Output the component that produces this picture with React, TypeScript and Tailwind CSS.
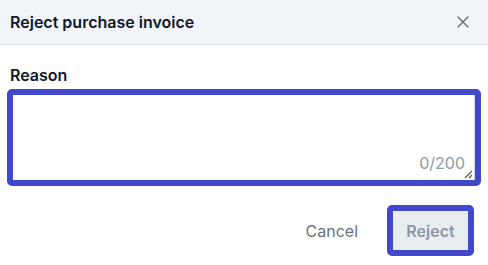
import { X } from 'lucide-react';

const App = () => {
  return (
    <div className="h-[265px] w-[488px] bg-white" style={{ fontFamily: 'Inter, "Noto Sans", sans-serif' }}>
      {/* Header */}
      <div className="flex h-[45px] items-center justify-between border-b border-[#d9dee6] bg-[#f1f4f9] pl-[10px] pr-[15px]">
        <h2 className="text-[16px] font-semibold text-[#111827]">Reject purchase invoice</h2>
        <X size={20} strokeWidth={1.5} className="text-[#5f6673]" />
      </div>

      {/* Body */}
      <div className="px-[10px] pt-[20px]">
        <label className="block text-[16px] font-semibold leading-[20px] text-[#111827]">Reason</label>
        <div className="relative -mx-[3px] mt-[4px] rounded-[5px] border-[6px] border-[#4148cd]">
          <textarea
            className="block h-[85px] w-full resize-none border-r border-[#d3d7de] bg-white outline-none"
            readOnly
          />
          <span className="absolute bottom-[5px] right-[10px] text-[16px] text-[#8e98a9]">0/200</span>
          <svg className="absolute bottom-[1px] right-[2px]" width="9" height="9" viewBox="0 0 9 9">
            <path d="M8 1L1 8M8 5L5 8" stroke="#555" strokeWidth="1.2" />
          </svg>
        </div>
      </div>

      {/* Footer */}
      <div className="mt-[19px] flex items-center justify-end gap-[29px] pr-[14px]">
        <button className="text-[16px] leading-[20px] text-[#6b7280]">Cancel</button>
        <button className="rounded-[5px] border-[6px] border-[#4148cd]">
          <span className="flex h-[39px] w-[75px] items-center justify-center bg-[#e9edf2] text-[16px] font-semibold leading-[20px] text-[#8b95a7]">
            Reject
          </span>
        </button>
      </div>
    </div>
  );
};

export default App;
